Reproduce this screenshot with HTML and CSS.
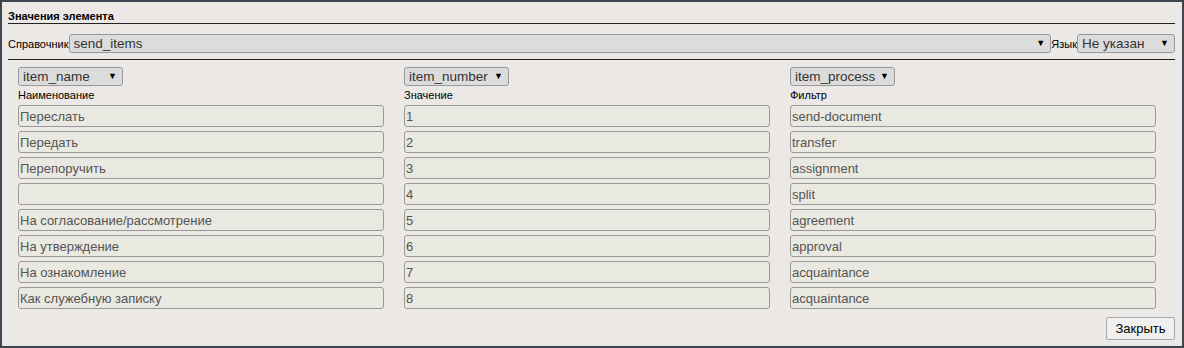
FILE: index.html
```html
<!DOCTYPE html>
<html>
<head>
    <meta charset="UTF-8">
    <title>Значения элемента</title>
    <link rel="stylesheet" href="styles.css">
</head>
<body>
<div class="frame">
    <div class="title">Значения элемента</div>
    <div class="toprow">
        <span class="lbl">Справочник</span>
        <span class="sel sel-wide"><select><option>send_items</option></select></span>
        <span class="lbl">Язык</span>
        <span class="sel sel-lang"><select><option>Не указан</option></select></span>
    </div>
    <div class="cols">
        <div class="col">
            <span class="sel sel-col"><select><option>item_name</option></select></span>
            <div class="colname">Наименование</div>
            <input type="text" value="Переслать">
            <input type="text" value="Передать">
            <input type="text" value="Перепоручить">
            <input type="text" value="">
            <input type="text" value="На согласование/рассмотрение">
            <input type="text" value="На утверждение">
            <input type="text" value="На ознакомление">
            <input type="text" value="Как служебную записку">
        </div>
        <div class="col">
            <span class="sel sel-col"><select><option>item_number</option></select></span>
            <div class="colname">Значение</div>
            <input type="text" value="1">
            <input type="text" value="2">
            <input type="text" value="3">
            <input type="text" value="4">
            <input type="text" value="5">
            <input type="text" value="6">
            <input type="text" value="7">
            <input type="text" value="8">
        </div>
        <div class="col">
            <span class="sel sel-col"><select><option>item_process</option></select></span>
            <div class="colname">Фильтр</div>
            <input type="text" value="send-document">
            <input type="text" value="transfer">
            <input type="text" value="assignment">
            <input type="text" value="split">
            <input type="text" value="agreement">
            <input type="text" value="approval">
            <input type="text" value="acquaintance">
            <input type="text" value="acquaintance">
        </div>
    </div>
    <div class="bottom">
        <button type="button">Закрыть</button>
    </div>
</div>
</body>
</html>
```

FILE: styles.css
```css
*{
    box-sizing:border-box;
    font-family:"Liberation Sans", Arial, sans-serif;
}

body{
    margin:0;
    background:#3b4651;
}

.frame{
    height:348px;
    border:2px solid #3b4651;
    background:#ebe8e5;
    padding:8px 7px 0 6px;
}

.title{
    font-size:11px;
    font-weight:bold;
    line-height:13px;
    color:#000;
    border-bottom:1px solid #222;
}

.toprow{
    display:flex;
    align-items:center;
    margin-top:10px;
    padding-bottom:6px;
    border-bottom:1px solid #222;
}

.lbl{
    font-size:11px;
    color:#000;
}

.sel{
    position:relative;
    display:inline-block;
    height:19px;
}

.sel select{
    -webkit-appearance:none;
    appearance:none;
    width:100%;
    height:19px;
    margin:0;
    padding:0 16px 0 4px;
    font-size:13.5px;
    color:#333;
    background:#dcdcdc;
    border:1px solid #999;
    border-radius:3px;
    outline:none;
}

/* стрелка у выпадающего списка */
.sel::after{
    content:"\25BC";
    position:absolute;
    right:6px;
    top:4px;
    font-size:9px;
    line-height:10px;
    color:#000;
    pointer-events:none;
}

.sel-wide{
    flex:1;
}

.sel-lang{
    width:98px;
}

.sel-col{
    width:105px;
}

.cols{
    display:grid;
    grid-template-columns:366px 366px 366px;
    column-gap:20px;
    padding-left:10px;
    margin-top:7px;
}

.col{
    display:flex;
    flex-direction:column;
    align-items:flex-start;
}

.colname{
    font-size:11px;
    line-height:13px;
    color:#000;
    margin-top:3px;
    margin-bottom:3px;
}

.col input{
    width:366px;
    height:22px;
    margin:0 0 4px 0;
    padding:0 1px;
    font-size:13px;
    color:#555;
    background:#e9e8e1;
    border:1px solid #999;
    border-radius:3px;
    outline:none;
}

.bottom{
    display:flex;
    justify-content:flex-end;
    margin-top:4px;
}

.bottom button{
    width:69px;
    height:23px;
    padding:0;
    font-size:13px;
    color:#000;
    background:#f0f0f0;
    border:1px solid #aaa;
    border-radius:2px;
}
```
